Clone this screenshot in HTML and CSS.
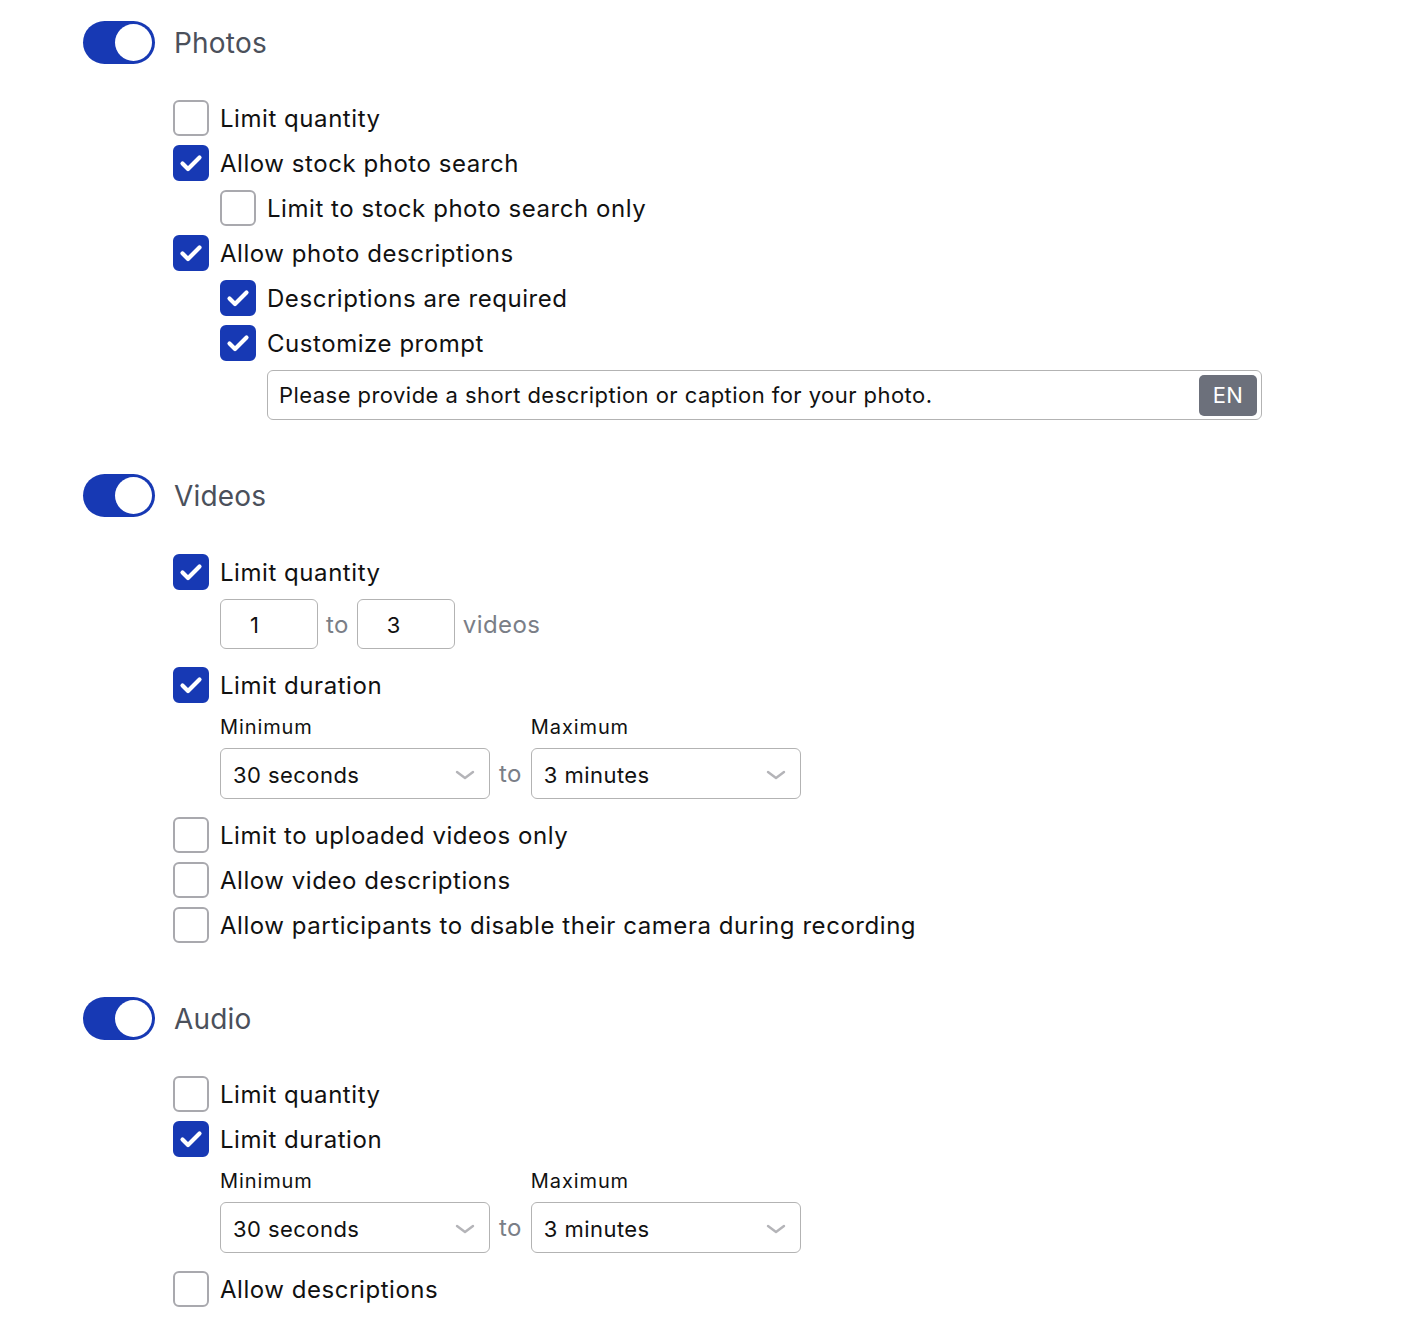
FILE: index.html
```html
<!DOCTYPE html>
<html lang="en">
<head>
<meta charset="utf-8">
<title>Media settings</title>
<link rel="stylesheet" href="styles.css">
</head>
<body>
<main class="page">

  <section class="section">
    <div class="section-head">
      <span class="toggle"><span class="knob"></span></span>
      <h2 class="section-title">Photos</h2>
    </div>
    <div class="options">
      <label class="row"><span class="box"></span><span class="label">Limit quantity</span></label>
      <label class="row"><span class="box checked"><svg viewBox="0 0 36 36"><path d="M9.5 18.5l5.5 5.5L26.5 12.5"/></svg></span><span class="label">Allow stock photo search</span></label>
      <label class="row indent"><span class="box"></span><span class="label">Limit to stock photo search only</span></label>
      <label class="row"><span class="box checked"><svg viewBox="0 0 36 36"><path d="M9.5 18.5l5.5 5.5L26.5 12.5"/></svg></span><span class="label">Allow photo descriptions</span></label>
      <label class="row indent"><span class="box checked"><svg viewBox="0 0 36 36"><path d="M9.5 18.5l5.5 5.5L26.5 12.5"/></svg></span><span class="label">Descriptions are required</span></label>
      <label class="row indent"><span class="box checked"><svg viewBox="0 0 36 36"><path d="M9.5 18.5l5.5 5.5L26.5 12.5"/></svg></span><span class="label">Customize prompt</span></label>
      <div class="prompt">
        <span class="prompt-text">Please provide a short description or caption for your photo.</span>
        <span class="lang">EN</span>
      </div>
    </div>
  </section>

  <section class="section">
    <div class="section-head">
      <span class="toggle"><span class="knob"></span></span>
      <h2 class="section-title">Videos</h2>
    </div>
    <div class="options options-videos">
      <label class="row"><span class="box checked"><svg viewBox="0 0 36 36"><path d="M9.5 18.5l5.5 5.5L26.5 12.5"/></svg></span><span class="label">Limit quantity</span></label>
      <div class="range">
        <span class="num">1</span>
        <span class="to">to</span>
        <span class="num">3</span>
        <span class="to">videos</span>
      </div>
      <label class="row"><span class="box checked"><svg viewBox="0 0 36 36"><path d="M9.5 18.5l5.5 5.5L26.5 12.5"/></svg></span><span class="label">Limit duration</span></label>
      <div class="duration">
        <div class="field">
          <span class="field-label">Minimum</span>
          <span class="select">30 seconds<svg class="chev" viewBox="0 0 20 12"><path d="M2 3l8 6 8-6"/></svg></span>
        </div>
        <span class="to dur-to">to</span>
        <div class="field">
          <span class="field-label">Maximum</span>
          <span class="select">3 minutes<svg class="chev" viewBox="0 0 20 12"><path d="M2 3l8 6 8-6"/></svg></span>
        </div>
      </div>
      <label class="row"><span class="box"></span><span class="label">Limit to uploaded videos only</span></label>
      <label class="row"><span class="box"></span><span class="label">Allow video descriptions</span></label>
      <label class="row"><span class="box"></span><span class="label">Allow participants to disable their camera during recording</span></label>
    </div>
  </section>

  <section class="section">
    <div class="section-head">
      <span class="toggle"><span class="knob"></span></span>
      <h2 class="section-title">Audio</h2>
    </div>
    <div class="options">
      <label class="row"><span class="box"></span><span class="label">Limit quantity</span></label>
      <label class="row"><span class="box checked"><svg viewBox="0 0 36 36"><path d="M9.5 18.5l5.5 5.5L26.5 12.5"/></svg></span><span class="label">Limit duration</span></label>
      <div class="duration">
        <div class="field">
          <span class="field-label">Minimum</span>
          <span class="select">30 seconds<svg class="chev" viewBox="0 0 20 12"><path d="M2 3l8 6 8-6"/></svg></span>
        </div>
        <span class="to dur-to">to</span>
        <div class="field">
          <span class="field-label">Maximum</span>
          <span class="select">3 minutes<svg class="chev" viewBox="0 0 20 12"><path d="M2 3l8 6 8-6"/></svg></span>
        </div>
      </div>
      <label class="row"><span class="box"></span><span class="label">Allow descriptions</span></label>
    </div>
  </section>

</main>
</body>
</html>
```

FILE: styles.css
```css
* { box-sizing: border-box; }

html, body {
  margin: 0;
  padding: 0;
  background: #ffffff;
}

body {
  font-family: Inter, "Noto Sans", "Liberation Sans", sans-serif;
  color: #111111;
}

.page {
  display: flex;
  flex-direction: column;
  gap: 54px;
  padding: 21px 0 0 83px;
}

.section {
  display: flex;
  flex-direction: column;
  gap: 36px;
}

.section-head {
  display: flex;
  align-items: center;
  gap: 19px;
  height: 43px;
}

.toggle {
  position: relative;
  width: 72px;
  height: 43px;
  border-radius: 22px;
  background: #1739b4;
  flex: none;
}

.knob {
  position: absolute;
  right: 3px;
  top: 3px;
  width: 37px;
  height: 37px;
  border-radius: 50%;
  background: #ffffff;
}

.section-title {
  margin: 0;
  padding-top: 1px;
  font-size: 28px;
  font-weight: 400;
  color: #4b505b;
  letter-spacing: 0.2px;
}

.options {
  display: flex;
  flex-direction: column;
  gap: 9px;
  padding-left: 90px;
}

.options-videos {
  margin-top: 1px;
}

.row {
  display: flex;
  align-items: center;
  gap: 11px;
  height: 36px;
}

.row.indent {
  padding-left: 47px;
}

.box {
  width: 36px;
  height: 36px;
  flex: none;
  border: 2px solid #a9a9ae;
  border-radius: 6px;
  background: #ffffff;
  display: flex;
  align-items: center;
  justify-content: center;
}

.box.checked {
  background: #1739b4;
  border-color: #1739b4;
}

.box svg {
  width: 36px;
  height: 36px;
  flex: none;
  fill: none;
  stroke: #ffffff;
  stroke-width: 4.2;
  stroke-linecap: round;
  stroke-linejoin: round;
}

.label {
  font-size: 24px;
  line-height: 36px;
  padding-top: 1px;
  letter-spacing: 0.55px;
  color: #111111;
  white-space: nowrap;
}

.prompt {
  margin-left: 94px;
  width: 995px;
  height: 50px;
  border: 1px solid #b3b3b3;
  border-radius: 6px;
  display: flex;
  align-items: center;
  justify-content: space-between;
  padding: 0 4px 0 11px;
}

.prompt-text {
  font-size: 22px;
  letter-spacing: 0.45px;
  color: #111111;
  white-space: nowrap;
}

.lang {
  width: 58px;
  height: 41px;
  border-radius: 5px;
  background: #6c707b;
  color: #ffffff;
  font-size: 22px;
  letter-spacing: 0.3px;
  display: flex;
  align-items: center;
  justify-content: center;
}

.range {
  display: flex;
  align-items: center;
  gap: 8px;
  margin-left: 47px;
  margin-bottom: 9px;
  height: 50px;
}

.num {
  width: 98px;
  height: 50px;
  border: 1px solid #b3b3b3;
  border-radius: 6px;
  padding: 2px 0 0 29px;
  font-size: 22px;
  display: flex;
  align-items: center;
}

.to {
  font-size: 24px;
  letter-spacing: 0.4px;
  color: #7a7e87;
}

.duration {
  display: flex;
  align-items: flex-end;
  gap: 9px;
  margin-left: 47px;
  margin-bottom: 9px;
}

.field {
  display: flex;
  flex-direction: column;
  gap: 7px;
}

.field-label {
  font-size: 20px;
  line-height: 28px;
  padding-top: 1px;
  letter-spacing: 0.9px;
  color: #111111;
}

.select {
  width: 270px;
  height: 51px;
  border: 1px solid #b3b3b3;
  border-radius: 6px;
  padding: 2px 14px 0 12px;
  font-size: 22px;
  letter-spacing: 0.45px;
  display: flex;
  align-items: center;
  justify-content: space-between;
}

.chev {
  width: 20px;
  height: 12px;
  fill: none;
  stroke: #b4b4b8;
  stroke-width: 2.4;
  stroke-linecap: round;
  stroke-linejoin: round;
}

.dur-to {
  height: 51px;
  display: flex;
  align-items: center;
}
```
